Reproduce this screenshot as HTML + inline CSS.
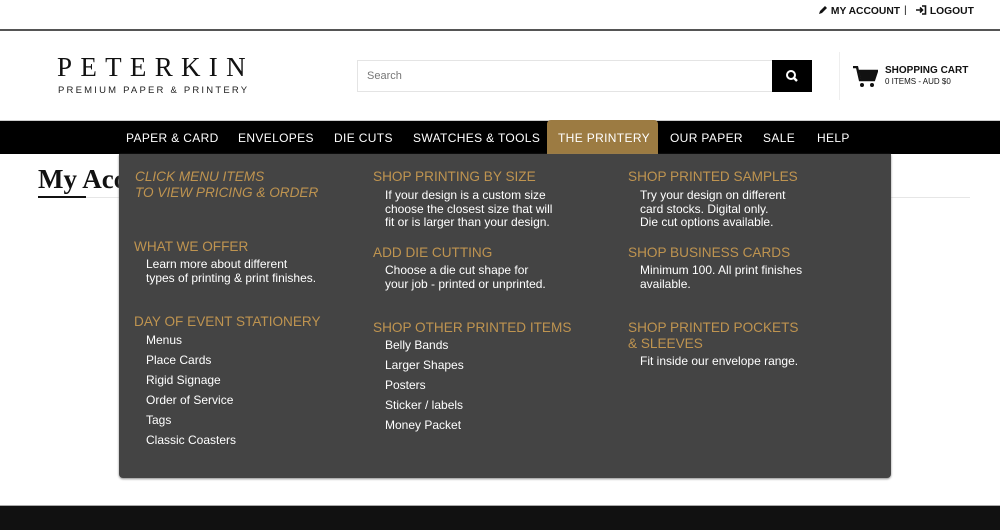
<!DOCTYPE html>
<html><head><meta charset="utf-8"><style>
*{margin:0;padding:0;box-sizing:border-box}
body{width:1000px;height:530px;overflow:hidden;background:#fff;font-family:"Liberation Sans",Arial,sans-serif;position:relative}
.a{position:absolute}
.top{top:0;left:0;width:1000px;height:31px;border-bottom:2px solid #555}
.topl{top:5px;font-size:10.3px;font-weight:bold;color:#111}
.nav{top:120px;left:0;width:1000px;height:34px;background:#000;border-top:1px solid #ccc}
.ni{top:131px;color:#fff;font-size:12px;letter-spacing:.35px}
.dd{left:119px;top:154px;width:772px;height:324px;background:#444;border-radius:0 0 4px 4px;box-shadow:0 1px 2px #888}
.h{color:#bf9450;font-size:13.6px;line-height:16px;position:absolute}
.t{color:#fff;font-size:12px;line-height:13.6px;position:absolute}
.l{color:#fff;font-size:12px;line-height:20px;position:absolute}
</style></head><body>
<div class="a top"></div>
<div class="a topl" style="left:818px"><svg width="10" height="10" viewBox="0 0 10 10" style="vertical-align:-1px"><path d="M1 9 L2 6 L7 1 L9 3 L4 8 Z" fill="#111"/></svg> MY ACCOUNT</div>
<div class="a topl" style="left:904px;font-weight:normal">|</div>
<div class="a topl" style="left:916px"><svg width="11" height="10" viewBox="0 0 11 10" style="vertical-align:-1px"><path d="M0 5H6M4 2.5L6.5 5L4 7.5M6 1H9.5V9H6" stroke="#111" stroke-width="1.6" fill="none"/></svg> LOGOUT</div>

<div class="a" style="left:57px;top:52px;font-family:'Liberation Serif',serif;font-size:27px;letter-spacing:8.3px;color:#111">PETERKIN</div>
<div class="a" style="left:58px;top:85px;font-size:9.5px;letter-spacing:2.2px;color:#222">PREMIUM PAPER &amp; PRINTERY</div>

<div class="a" style="left:357px;top:60px;width:416px;height:32px;border:1px solid #e4e4e4"></div>
<div class="a" style="left:367px;top:70px;font-size:11px;color:#777">Search</div>
<div class="a" style="left:772px;top:60px;width:40px;height:32px;background:#000"><svg width="40" height="32" viewBox="0 0 40 32"><circle cx="19" cy="15" r="4" stroke="#fff" stroke-width="2" fill="none"/><path d="M22 18L25 21" stroke="#fff" stroke-width="2.4"/></svg></div>
<div class="a" style="left:839px;top:52px;width:1px;height:48px;background:#eee"></div>
<svg class="a" style="left:853px;top:66px" width="25" height="22" viewBox="0 0 25 22"><path d="M0 1H4L7 14H21L24 5H6" fill="none" stroke="#111" stroke-width="2.4"/><path d="M6 5H24L21 14H8Z" fill="#111"/><circle cx="9" cy="19" r="2" fill="#111"/><circle cx="19" cy="19" r="2" fill="#111"/></svg>
<div class="a" style="left:885px;top:65px;font-size:10px;font-weight:bold;color:#111">SHOPPING CART</div>
<div class="a" style="left:885px;top:77px;font-size:8px;color:#111">0 ITEMS - AUD $0</div>

<div class="a nav"></div>
<div class="a" style="left:547px;top:120px;width:111px;height:34px;background:#9c7b42;border-radius:4px 4px 0 0"></div>
<div class="a ni" style="left:126px">PAPER &amp; CARD</div>
<div class="a ni" style="left:238px">ENVELOPES</div>
<div class="a ni" style="left:334px">DIE CUTS</div>
<div class="a ni" style="left:413px">SWATCHES &amp; TOOLS</div>
<div class="a ni" style="left:558px">THE PRINTERY</div>
<div class="a ni" style="left:670px">OUR PAPER</div>
<div class="a ni" style="left:763px">SALE</div>
<div class="a ni" style="left:817px">HELP</div>

<div class="a" style="left:38px;top:164px;font-family:'Liberation Serif',serif;font-weight:bold;font-size:27px;color:#111">My Account</div>
<div class="a" style="left:38px;top:197px;width:932px;height:1px;background:#e6e6e6"></div>
<div class="a" style="left:38px;top:196px;width:48px;height:2px;background:#111"></div>

<div class="a dd">
<div class="h" style="left:16px;top:15px;font-style:italic">CLICK MENU ITEMS<br>TO VIEW PRICING &amp; ORDER</div>
<div class="h" style="left:15px;top:85px">WHAT WE OFFER</div>
<div class="t" style="left:27px;top:104px">Learn more about different<br>types of printing &amp; print finishes.</div>
<div class="h" style="left:15px;top:160px">DAY OF EVENT STATIONERY</div>
<div class="l" style="left:27px;top:176px">Menus<br>Place Cards<br>Rigid Signage<br>Order of Service<br>Tags<br>Classic Coasters</div>

<div class="h" style="left:254px;top:15px">SHOP PRINTING BY SIZE</div>
<div class="t" style="left:266px;top:35px">If your design is a custom size<br>choose the closest size that will<br>fit or is larger than your design.</div>
<div class="h" style="left:254px;top:91px">ADD DIE CUTTING</div>
<div class="t" style="left:266px;top:110px">Choose a die cut shape for<br>your job - printed or unprinted.</div>
<div class="h" style="left:254px;top:166px">SHOP OTHER PRINTED ITEMS</div>
<div class="l" style="left:266px;top:181px">Belly Bands<br>Larger Shapes<br>Posters<br>Sticker / labels<br>Money Packet</div>

<div class="h" style="left:509px;top:15px">SHOP PRINTED SAMPLES</div>
<div class="t" style="left:521px;top:35px">Try your design on different<br>card stocks. Digital only.<br>Die cut options available.</div>
<div class="h" style="left:509px;top:91px">SHOP BUSINESS CARDS</div>
<div class="t" style="left:521px;top:110px">Minimum 100. All print finishes<br>available.</div>
<div class="h" style="left:509px;top:166px">SHOP PRINTED POCKETS<br>&amp; SLEEVES</div>
<div class="t" style="left:521px;top:201px">Fit inside our envelope range.</div>
</div>

<div class="a" style="left:0;top:505px;width:1000px;height:25px;background:#111;border-top:1px solid #aaa"></div>
</body></html>
